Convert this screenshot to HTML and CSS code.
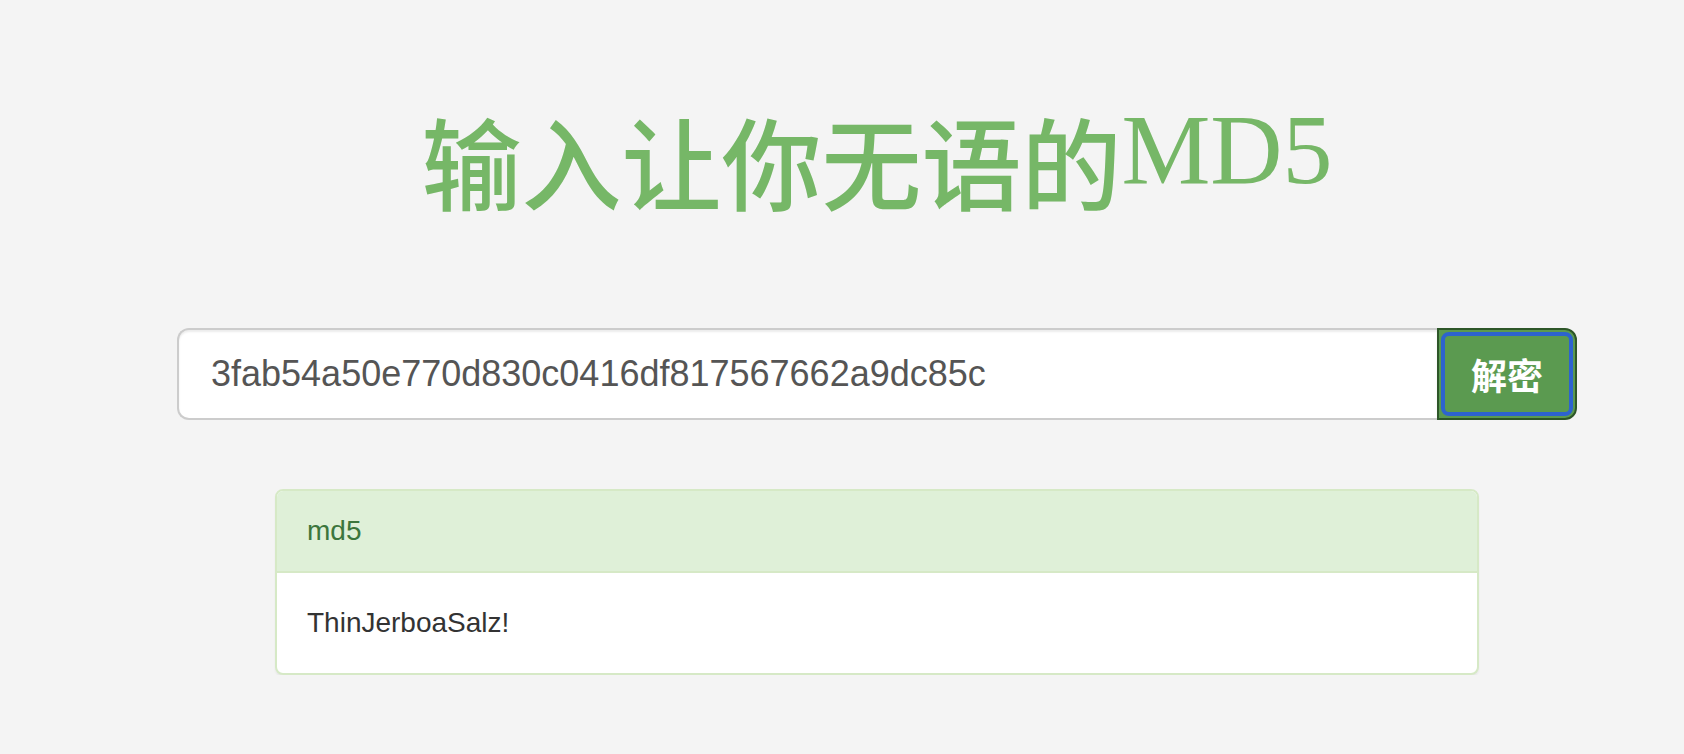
FILE: index.html
```html
<!DOCTYPE html>
<html lang="zh-CN">

<head>
    <meta charset="UTF-8">
    <meta name="viewport" content="width=device-width, initial-scale=1.0">
    <title>MD5</title>
    <link rel="stylesheet" href="styles.css">
</head>

<body>
    <div class="container">
        <h1 class="title"><span class="cjk">输入让你无语的</span>MD5</h1>
        <form class="search" onsubmit="return false;">
            <input class="search-input" type="text" value="3fab54a50e770d830c0416df817567662a9dc85c">
            <button class="search-button" type="submit">解密</button>
        </form>
        <div class="panel">
            <div class="panel-heading">md5</div>
            <div class="panel-body">ThinJerboaSalz!</div>
        </div>
    </div>
</body>

</html>
```

FILE: styles.css
```css
body {
    margin: 0;
    background-color: #f4f4f4;
    font-family: "Liberation Sans", "Noto Sans CJK SC", sans-serif;
    color: #333;
}

.container {
    width: 1400px;
    margin-left: 177px;
    padding-top: 90px;
}

.title {
    margin: 0;
    font-family: "Liberation Serif", "Noto Sans CJK SC", serif;
    font-size: 100px;
    font-weight: normal;
    line-height: 120px;
    text-align: center;
    color: #76b767;
}

.title .cjk {
    font-weight: 500;
    vertical-align: -20px;
}

.search {
    display: flex;
    height: 92px;
    margin: 0;
    margin-top: 98px;
}

.search-input {
    flex: 1;
    box-sizing: border-box;
    height: 92px;
    padding: 0 32px;
    border: 2px solid #ccc;
    border-right: 0;
    border-radius: 12px 0 0 12px;
    background-color: #fff;
    box-shadow: inset 0 2px 2px rgba(0, 0, 0, 0.075);
    font-family: "Liberation Sans", sans-serif;
    font-size: 36px;
    color: #555;
    outline: none;
}

.search-button {
    position: relative;
    box-sizing: border-box;
    width: 140px;
    height: 92px;
    padding: 0;
    border: 2px solid #2d5628;
    border-radius: 0 12px 12px 0;
    background-color: #5b9a50;
    font-family: "Noto Sans CJK SC", sans-serif;
    font-size: 36px;
    font-weight: bold;
    color: #fff;
    cursor: pointer;
}

.search-button::before {
    content: "";
    position: absolute;
    top: 2px;
    left: 2px;
    right: 2px;
    bottom: 2px;
    border: 4px solid #2d63cf;
    border-radius: 8px;
}

.panel {
    margin: 69px 98px 0;
    border: 2px solid #d6e9c6;
    border-radius: 8px;
    background-color: #fff;
    box-shadow: 0 2px 2px rgba(0, 0, 0, 0.05);
    font-size: 28px;
    line-height: 40px;
}

.panel-heading {
    padding: 20px 30px;
    border-bottom: 2px solid #d6e9c6;
    border-radius: 6px 6px 0 0;
    background-color: #dff0d8;
    color: #3c763d;
}

.panel-body {
    padding: 30px;
}
```
